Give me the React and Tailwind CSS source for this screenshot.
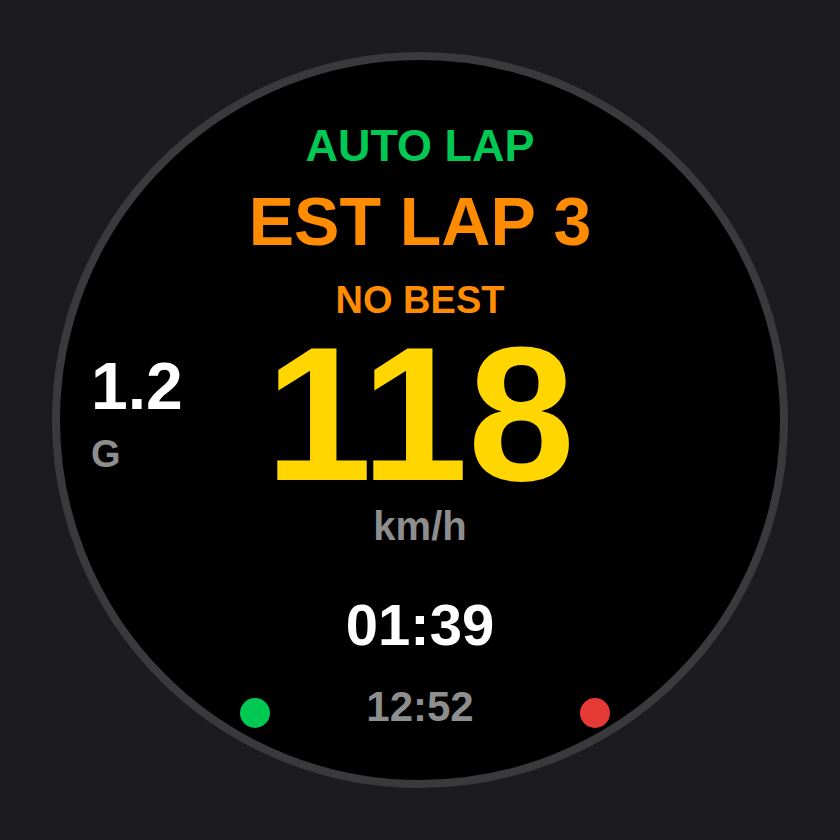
import React from 'react';

const font = { fontFamily: '"Liberation Sans", Arial, sans-serif' };

const LapDial = () => {
  return (
    <div className="w-full h-[840px] bg-[#1c1c1e] flex items-center justify-center" style={font}>
      <div className="w-[736px] h-[736px] rounded-full border-8 border-[#3a3a3c] bg-black flex flex-col items-center pt-[63px] font-bold">
        <div className="text-[45px] leading-none text-[#00c853]">AUTO LAP</div>
        <div className="mt-[19px] text-[68px] leading-none text-[#ff8c00]">EST LAP 3</div>
        <div className="mt-[26px] text-[38px] leading-none text-[#ff8c00]">NO BEST</div>

        {/* speed row, g-force on the left */}
        <div className="mt-[20px] w-full grid grid-cols-[1fr_auto_1fr]">
          <div className="pl-[31px] pt-[14px] flex flex-col items-start">
            <div className="text-[66px] leading-none text-white">1.2</div>
            <div className="mt-[16px] text-[38px] leading-none text-[#8e8e8e]">G</div>
          </div>
          <div className="text-[192px] leading-[150px] text-[#ffd600]">118</div>
          <div />
        </div>

        <div className="mt-[17px] text-[40px] leading-none text-[#8e8e8e]">km/h</div>
        <div className="mt-[50px] text-[58px] leading-none text-white">01:39</div>

        <div className="mt-[32px] w-full grid grid-cols-[1fr_auto_1fr] items-end">
          <div className="flex justify-end pr-[96px]">
            <div className="w-[30px] h-[30px] rounded-full bg-[#00c853]" />
          </div>
          <div className="text-[42px] leading-none text-[#8e8e8e]">12:52</div>
          <div className="flex justify-start pl-[106px]">
            <div className="w-[30px] h-[30px] rounded-full bg-[#e53935]" />
          </div>
        </div>
      </div>
    </div>
  );
};

export default LapDial;
